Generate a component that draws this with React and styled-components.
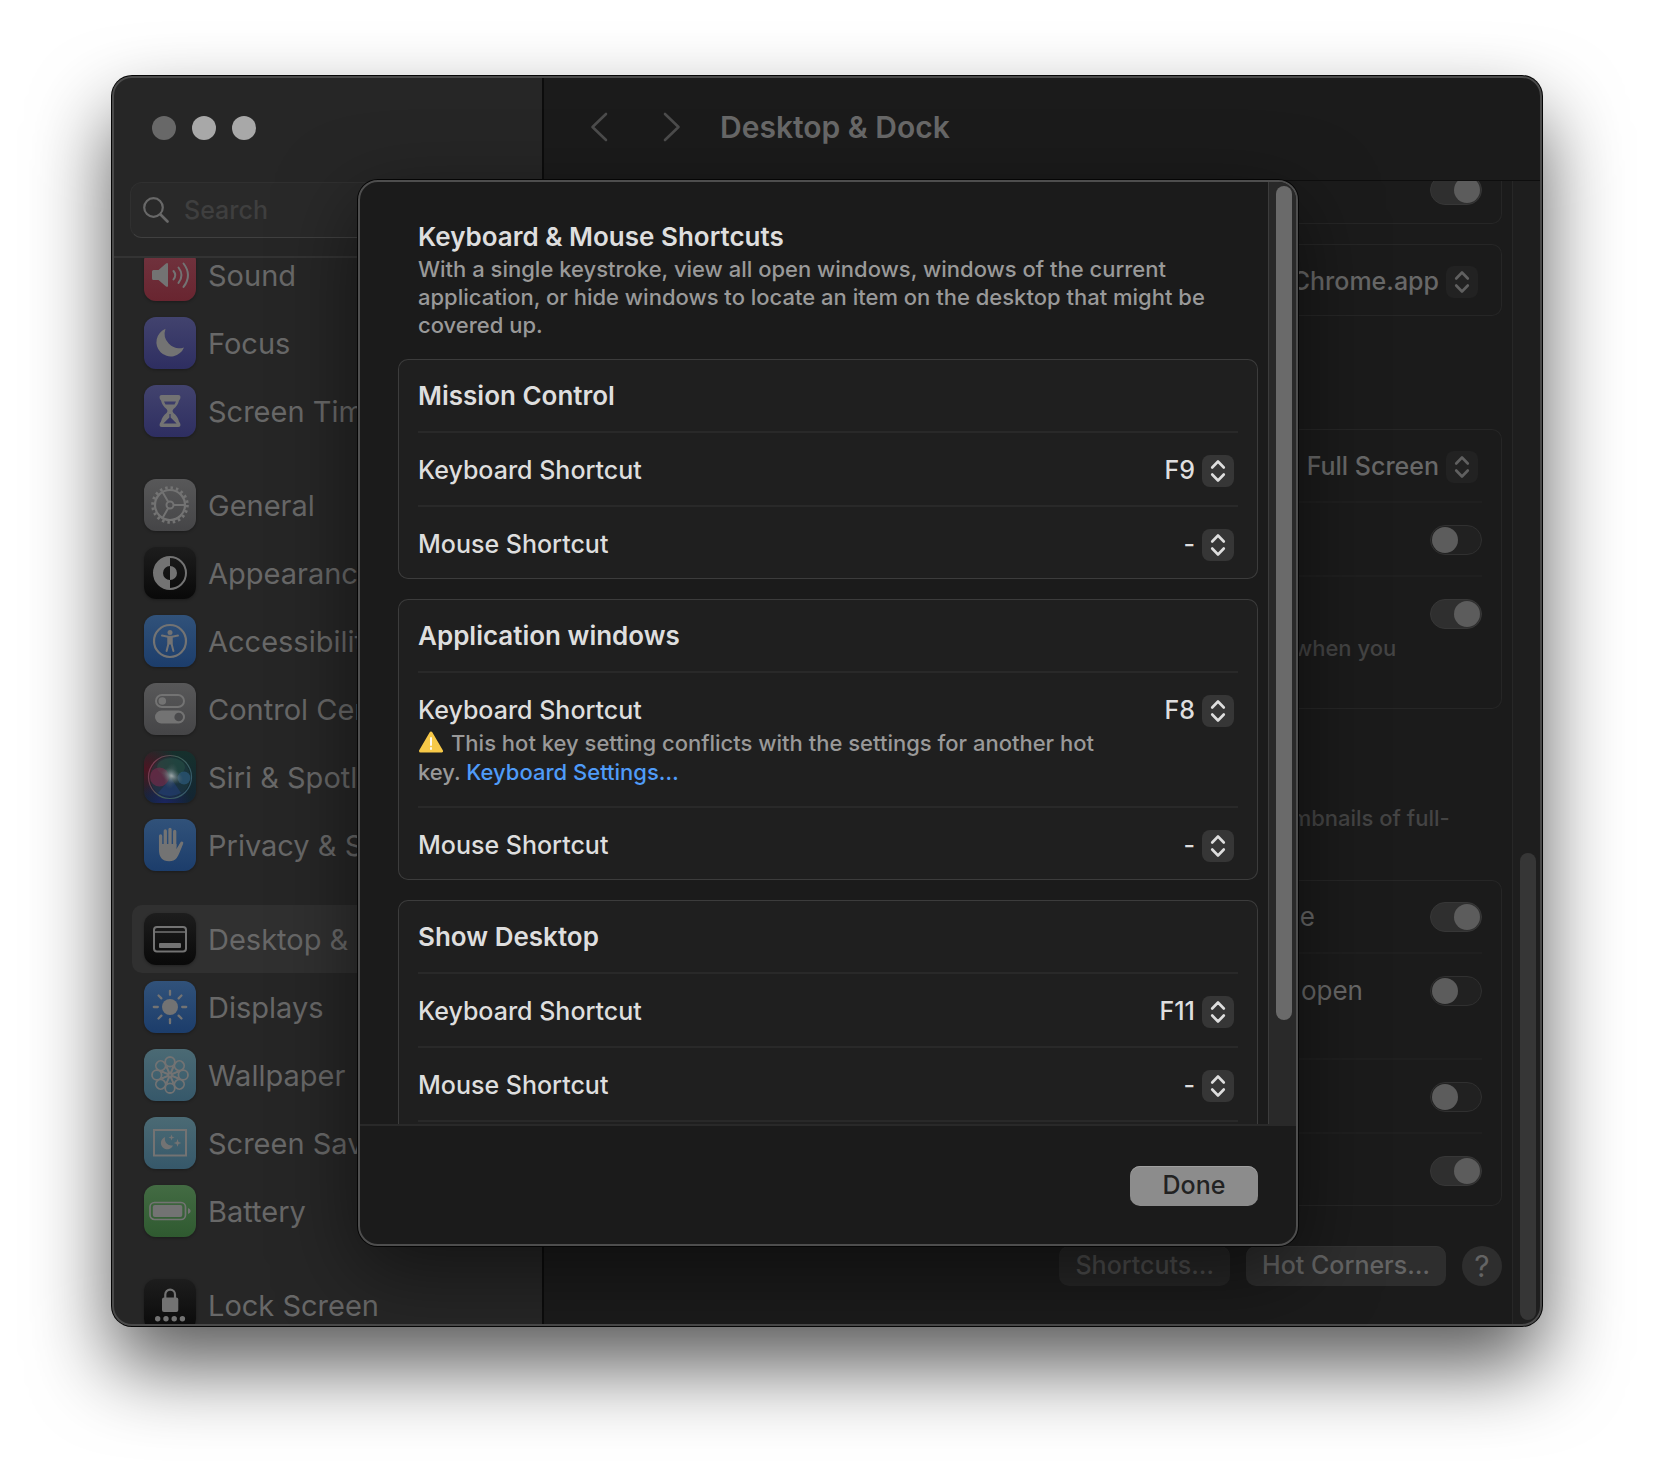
import React from "react";
import styled, { createGlobalStyle, css } from "styled-components";

const GlobalStyle = createGlobalStyle`
  *, *::before, *::after { box-sizing: border-box; }
  body {
    margin: 0;
    background: #fff;
    font-family: Inter, "Liberation Sans", sans-serif;
    font-size: 26px;
    line-height: 32px;
    overflow: hidden;
  }
  button, input, select { font: inherit; }
  ul { list-style: none; margin: 0; padding: 0; }
  h1, h2, h3, p { margin: 0; font-size: inherit; }
`;

/* ---------- window ---------- */

const Page = styled.div`
  display: flex;
  height: 100vh;
  padding: 76px 112px 148px;
`;

const Window = styled.div`
  position: relative;
  flex: 1;
  display: flex;
  min-width: 0;
  border-radius: 20px;
  background: #1b1b1b;
  color: #686868;
  box-shadow: 0 0 0 1px #050505, 0 40px 80px rgba(0, 0, 0, 0.65);
  overflow: hidden;
`;

const Rim = styled.div`
  position: absolute;
  inset: 0;
  border: 2px solid #4a4a4a;
  border-radius: inherit;
  pointer-events: none;
`;

/* ---------- sidebar ---------- */

const Sidebar = styled.aside`
  display: flex;
  flex-direction: column;
  flex: none;
  width: 432px;
  background: #262626;
  border-right: 2px solid #0c0c0c;
`;

const TrafficLights = styled.div`
  display: flex;
  gap: 16px;
  padding: 40px 40px 42px;
`;

const Light = styled.button`
  width: 24px;
  height: 24px;
  padding: 0;
  border: 0;
  border-radius: 50%;
  background: ${(p) => (p.$dim ? "#686868" : "#a8a8a8")};
`;

const SearchBox = styled.label`
  display: flex;
  align-items: center;
  gap: 15px;
  height: 56px;
  margin: 0 18px 18px;
  padding: 0 12px;
  border: 1px solid #303030;
  border-bottom-color: #404040;
  border-radius: 12px;
  background: #292929;
`;

const SearchInput = styled.input`
  flex: 1;
  min-width: 0;
  padding: 0;
  border: 0;
  outline: 0;
  background: none;
  color: #686868;
  font-size: 25px;
  font-weight: 500;
  &::placeholder { color: #3f3f3f; opacity: 1; }
`;

const SidebarScroll = styled.nav`
  flex: 1;
  min-height: 0;
  padding: 0 20px;
  border-top: 2px solid #333;
  overflow: hidden;
`;

const Groups = styled.div`
  display: flex;
  flex-direction: column;
  gap: 26px;
  margin-top: -17px;
`;

const NavLink = styled.a`
  display: flex;
  align-items: center;
  gap: 12px;
  height: 68px;
  padding: 0 12px;
  border-radius: 10px;
  background: ${(p) => (p.$active ? "#303030" : "none")};
  color: inherit;
  text-decoration: none;
`;

const NavLabel = styled.span`
  padding-top: 1px;
  font-size: 29px;
  white-space: nowrap;
`;

const Tile = styled.svg`
  flex: none;
  width: 52px;
  height: 52px;
  border-radius: 12px;
  background: linear-gradient(${(p) => p.$from}, ${(p) => p.$to});
  box-shadow: 0 1px 3px rgba(0, 0, 0, 0.3);
`;

/* ---------- main pane ---------- */

const Main = styled.main`
  flex: 1;
  display: flex;
  flex-direction: column;
  min-width: 0;
`;

const Toolbar = styled.header`
  display: flex;
  align-items: center;
  height: 105px;
  padding: 0 39px 2px;
  border-bottom: 1px solid #0e0e0e;
`;

const ToolButton = styled.button`
  display: grid;
  place-items: center;
  width: 32px;
  height: 40px;
  margin-right: 41px;
  padding: 0;
  border: 0;
  background: none;
  color: #4c4c4c;
`;

const Title = styled.h1`
  margin-left: -9px;
  font-size: 30px;
  font-weight: 600;
`;

const MainBody = styled.div`
  flex: 1;
  display: flex;
  min-height: 0;
`;

const MainScroll = styled.div`
  flex: 1;
  display: flex;
  flex-direction: column;
  justify-content: flex-end;
  min-width: 0;
  padding: 0 10px 40px 32px;
  overflow: hidden;
`;

const Track = styled.div`
  display: flex;
  flex-direction: column;
  justify-content: ${(p) => (p.$end ? "flex-end" : "flex-start")};
  flex: 0 0 30px;
  padding: 6px 6px 6px 7px;
  border-left: 1px solid ${(p) => (p.$lit ? "#3c3c3c" : "#272727")};
  background: ${(p) => (p.$lit ? "#292929" : "#1e1e1e")};
`;

const Thumb = styled.div`
  flex: 0 0 ${(p) => p.$size};
  border-radius: 8px;
  background: ${(p) => (p.$lit ? "#6a6a6a" : "#363636")};
`;

const Card = styled.section`
  flex: none;
  padding: 0 20px;
  border-radius: 10px;
  background: ${(p) => (p.$lit ? "#1f1f1f" : "#1b1b1b")};
  box-shadow: inset 0 0 0 1px ${(p) => (p.$lit ? "#3c3c3c" : "#262626")};
  & + & { margin-top: 20px; }
  > * + * { border-top: 2px solid ${(p) => (p.$lit ? "#292929" : "#1f1f1f")}; }
`;

const Row = styled.div`
  display: flex;
  justify-content: space-between;
  padding: 21px 0 19px;
`;

const RowText = styled.div`
  font-size: ${(p) => (p.$lit ? "25px" : "26px")};
  font-weight: ${(p) => (p.$lit ? 500 : 400)};
  white-space: nowrap;
`;

const CardTitle = styled.h3`
  font-size: 26px;
  font-weight: 600;
`;

const Note = styled.p`
  margin-top: 4px;
  color: ${(p) => (p.$lit ? "#999" : "#444")};
  font-size: 22px;
  font-weight: 500;
  line-height: 28px;
`;

const ConflictNote = styled(Note)`
  margin-top: 3px;
  line-height: 29px;
`;

const Heading = styled.div`
  flex: none;
  padding: ${(p) => (p.$lit ? "39px 20px 20px" : "61px 20px 20px")};
  color: ${(p) => (p.$lit ? "#dedede" : "inherit")};
`;

const HeadingTitle = styled.h2`
  font-size: 26px;
  font-weight: 600;
`;

const HeadingNote = styled(Note)`
  margin-top: 2px;
  white-space: nowrap;
`;

const SelectWrap = styled.div`
  position: relative;
  flex: none;
  height: 32px;
  margin-right: 4px;
`;

const Select = styled.select`
  appearance: none;
  width: ${(p) => (p.$wide ? "320px" : "120px")};
  height: 32px;
  padding: 0 39px 0 0;
  border: 0;
  outline: 0;
  background: none;
  color: inherit;
  font-size: 25px;
  font-weight: 500;
  line-height: 32px;
  text-align: right;
  text-align-last: right;
`;

const Stepper = styled.span`
  position: absolute;
  top: 1px;
  right: 0;
  display: grid;
  width: 32px;
  height: 32px;
  border-radius: 8px;
  background: ${(p) => (p.$lit ? "#363636" : "#222")};
  pointer-events: none;
`;

const Toggle = styled.input`
  appearance: none;
  flex: none;
  width: 52px;
  height: 30px;
  margin: 1px 0 0;
  padding: 1px;
  border: 1px solid #303030;
  border-radius: 15px;
  background: #212121;
  &::before {
    content: "";
    display: block;
    width: 26px;
    height: 26px;
    border-radius: 50%;
    background: #5c5c5c;
  }
  &:checked { background: #2f2f2f; border-color: #373737; }
  &:checked::before { margin-left: auto; }
`;

const Actions = styled.div`
  flex: none;
  display: flex;
  justify-content: flex-end;
  gap: 16px;
  padding-top: 40px;
`;

const buttonBase = css`
  height: 40px;
  padding: 0 16px 2px;
  border: 0;
  border-radius: 10px;
  font-size: 25px;
  font-weight: 500;
  line-height: 38px;
`;

const PushButton = styled.button`
  ${buttonBase}
  background: ${(p) => (p.$pressed ? "#262626" : "#2e2e2e")};
  color: ${(p) => (p.$pressed ? "#4c4c4c" : "#646464")};
  box-shadow: inset 0 1px ${(p) => (p.$pressed ? "#2a2a2a" : "#333")};
`;

const HelpButton = styled.button`
  ${buttonBase}
  width: 40px;
  padding: 0;
  border-radius: 50%;
  background: #2e2e2e;
  color: #646464;
  font-size: 30px;
  font-weight: 400;
`;

/* ---------- sheet ---------- */

const Overlay = styled.div`
  position: absolute;
  inset: 0;
  display: flex;
  padding: 104px 244px 80px 246px;
`;

const Sheet = styled.div`
  position: relative;
  flex: 1;
  display: flex;
  flex-direction: column;
  min-width: 0;
  border: 2px solid #4e4e4e;
  border-radius: 20px;
  background: #1b1b1b;
  color: #dedede;
  box-shadow: 0 0 0 1px #050505, 0 24px 80px rgba(0, 0, 0, 0.5);
`;

const SheetBody = styled.div`
  flex: 1;
  display: flex;
  min-height: 0;
  border-radius: 18px 18px 0 0;
  overflow: hidden;
`;

const SheetScroll = styled.div`
  flex: 1;
  min-width: 0;
  padding: 0 10px 0 38px;
  overflow: hidden;
`;

const SheetTrack = styled(Track)`
  flex-basis: 28px;
  padding: 4px 4px 4px 7px;
`;

const SheetFooter = styled.footer`
  display: flex;
  justify-content: flex-end;
  padding: 40px 38px 38px;
  border-top: 2px solid #292929;
`;

const DoneButton = styled.button`
  ${buttonBase}
  width: 128px;
  background: #8c8c8c;
  color: #222;
  box-shadow: inset 0 1px #a0a0a0;
`;

const InlineLink = styled.a`
  color: #4f9bf8;
  text-decoration: none;
`;

const WarnIcon = styled.svg`
  width: 26px;
  height: 22px;
  margin-right: 7px;
  vertical-align: -2px;
`;

/* ---------- icons ---------- */

const G = "#737373";
const spin = (n, fn) => Array.from({ length: n }, (_, i) => fn((360 / n) * i, i));

const icons = {
  sound: (
    <>
      <path d="M8 22.5q0-1.5 1.5-1.5h5l7.5-6.6q2-1.2 2 1v21.2q0 2.200-2 1l-7.500-6.600h-5q-1.500 0-1.500-1.500z" fill={G} />
      <g fill="none" stroke={G} strokeWidth="2" strokeLinecap="round">
        <path d="M29.500 22q3.500 4.200 0 8.400M34.500 18.500q6 7.700 0 15.400M39.500 14.500q9 11.700 0 23.400" />
      </g>
    </>
  ),
  focus: <path d="M21.500 11.800A14.300 14.300 0 1 0 40 30.400A14.600 14.600 0 0 1 21.500 11.800z" fill={G} />,
  hourglass: (
    <path fillRule="evenodd" fill={G} d="M17.500 10h17q2 0 2 2t-1.500 3.500c-1 4-2.500 6-5.500 8.500q-1.800 1.800 0 4c3 2.500 4.500 4.500 5.500 8.500q1.500 1.500 1.500 3.500t-2 2h-17q-2 0-2-2t1.500-3.500c1-4 2.500-6 5.500-8.500q1.800-2.200 0-4c-3-2.500-4.500-4.500-5.500-8.500q-1.500-1.500-1.500-3.500t2-2zM20 16.500h12l-1.500 3h-9zM26.600 29v3.500l6 6h-13.200l6-6V29z" />
  ),
  gear: (
    <g fill="none" stroke={G}>
      <circle cx="26" cy="26" r="15" strokeWidth="2.200" />
      <circle cx="26" cy="26" r="17.300" strokeWidth="3" strokeDasharray="2.500 2.935" />
      <circle cx="26" cy="26" r="3.500" strokeWidth="2" />
      <path strokeWidth="2" d="M30 26h11M24 22.500L18.500 13M24 29.500L18.500 39" />
    </g>
  ),
  appearance: (
    <>
      <circle cx="26" cy="26" r="16" fill="none" stroke={G} strokeWidth="2" />
      <path d="M26 10a16 16 0 0 0 0 32v-9a7 7 0 0 1 0-14z" fill={G} />
      <path d="M26 19a7 7 0 0 1 0 14z" fill={G} />
    </>
  ),
  accessibility: (
    <>
      <circle cx="26" cy="26" r="16" fill="none" stroke={G} strokeWidth="2.200" />
      <circle cx="26" cy="17.500" r="2.500" fill={G} />
      <path d="M18 20.600l6 1.200h4l6-1.200M24.500 23v5.500L22.600 36M27.500 23v5.500l1.900 7.500" fill="none" stroke={G} strokeWidth="2" strokeLinecap="round" strokeLinejoin="round" />
      <path d="M23.500 21.500h5v8h-5z" fill={G} />
    </>
  ),
  control: (
    <>
      <rect x="12" y="12" width="28" height="12" rx="6" fill="none" stroke={G} strokeWidth="2" />
      <circle cx="18.300" cy="18" r="3.800" fill={G} />
      <rect x="11" y="27.500" width="30" height="13" rx="6.500" fill={G} />
      <circle cx="34.700" cy="34" r="4.300" fill="#4a4a4c" />
    </>
  ),
  siri: (
    <>
      <defs>
        <radialGradient id="siriCore"><stop offset="0" stopColor="#a0a8a8" /><stop offset=".35" stopColor="#7b8b90" stopOpacity=".6" /><stop offset="1" stopColor="#566" stopOpacity="0" /></radialGradient>
        <radialGradient id="siriRed" cx=".05" cy=".35" r=".6"><stop offset="0" stopColor="#4c1522" /><stop offset="1" stopColor="#4c1522" stopOpacity="0" /></radialGradient>
        <radialGradient id="siriBlue" cx=".4" cy="1" r=".5"><stop offset="0" stopColor="#1b2560" /><stop offset="1" stopColor="#1b2560" stopOpacity="0" /></radialGradient>
        <linearGradient id="siriRing" x1="0" x2="1" y1="0.300" y2=".7"><stop offset="0" stopColor="#7a3850" /><stop offset=".5" stopColor="#3f5f56" /><stop offset="1" stopColor="#34586a" /></linearGradient>
      </defs>
      <rect width="52" height="52" fill="url(#siriRed)" />
      <rect width="52" height="52" fill="url(#siriBlue)" />
      <circle cx="26" cy="26" r="20" fill="#22404a" opacity=".45" />
      <ellipse cx="27" cy="16" rx="14" ry="9" fill="#2a5a48" opacity=".4" />
      <circle cx="15.500" cy="26" r="9.500" fill="#7d2a4c" opacity=".6" />
      <circle cx="40" cy="27" r="6.500" fill="#2f5f86" opacity=".6" />
      <path d="M27 27L14 42q12 6 23 0z" fill="#24407c" opacity=".5" />
      <ellipse cx="28" cy="25" rx="12" ry="7" fill="url(#siriCore)" transform="rotate(25 28 25)" />
      <ellipse cx="27" cy="25" rx="7" ry="13" fill="url(#siriCore)" opacity=".6" transform="rotate(10 27 25)" />
      <circle cx="26" cy="26" r="21.500" fill="none" stroke="url(#siriRing)" strokeWidth="1.200" />
    </>
  ),
  hand: (
    <g fill={G} stroke={G} strokeLinecap="round">
      <path strokeWidth="3.300" fill="none" d="M16.600 17v14M21.300 12v15M26 10.500v15M30.700 12.500v15" />
      <path strokeWidth="3" fill="none" d="M37.800 24L33 33" />
      <path stroke="none" d="M15 25h17.500v5l3.500-5.500 2.700 1c-2 5.500-4 10.500-6 13.500-2 2.500-4 3.200-7.500 3.200C18 42.200 15 38 15 31z" />
    </g>
  ),
  desktop: (
    <>
      <rect x="10" y="14" width="32" height="24.500" rx="3" fill="none" stroke={G} strokeWidth="2" />
      <path d="M10 19h32" stroke={G} strokeWidth="1.600" />
      <rect x="15" y="30" width="22" height="5" rx="1" fill={G} />
    </>
  ),
  displays: (
    <>
      <circle cx="26" cy="26" r="8" fill={G} />
      {spin(8, (a) => (
        <path key={a} d="M26 9.800v4" stroke={G} strokeWidth="2.300" strokeLinecap="round" transform={`rotate(${a} 26 26)`} />
      ))}
    </>
  ),
  wallpaper: (
    <g fill="none" stroke={G} strokeWidth="1.800">
      {spin(8, (a) => (
        <g key={a} transform={`rotate(${a} 26 26)`}>
          <circle cx="26" cy="12.800" r="4.800" />
          <path d="M26 25C24.500 22 23 19.500 22.800 16.400M26 25C27.500 22 29 19.500 29.200 16.400" strokeWidth="1.600" />
        </g>
      ))}
      <circle cx="26" cy="26" r="2" />
    </g>
  ),
  saver: (
    <>
      <rect x="10" y="13" width="32" height="25.500" fill="none" stroke={G} strokeWidth="2" />
      <path d="M21.200 20a6.300 6.300 0 1 0 7.800 8.400A6.600 6.600 0 0 1 21.200 20z" fill={G} />
      <path d="M27.500 17.500l.8 2.200 2.200.8-2.200.8-.8 2.200-.8-2.200-2.200-.8 2.200-.8zM33.500 22l1 2.900 2.900 1-2.900 1-1 2.900-1-2.900-2.900-1 2.900-1z" fill={G} />
    </>
  ),
  battery: (
    <>
      <rect x="6" y="17.500" width="35.500" height="17" rx="4.500" fill="none" stroke={G} strokeWidth="1.700" />
      <rect x="8.800" y="20" width="29.500" height="12" rx="2" fill={G} />
      <path d="M44 23q2.700.8 2.700 3t-2.700 3z" fill={G} />
    </>
  ),
  lock: (
    <>
      <rect x="18" y="18.500" width="16.300" height="14.500" rx="2" fill={G} />
      <path d="M21.300 19v-3.500a4.850 4.850 0 0 1 9.700 0V19" fill="none" stroke={G} strokeWidth="2.200" />
      {[13.7, 22, 30.2, 38.4].map((x) => <circle key={x} cx={x} cy="39.700" r="2.700" fill={G} />)}
    </>
  ),
};

const tileColors = {
  red: ["#71343f", "#692530"],
  indigo: ["#42436e", "#2e2e61"],
  gray: ["#585859", "#454547"],
  black: ["#1d1d1d", "#090909"],
  blue: ["#31527a", "#1c3d6b"],
  siri: ["#16302c", "#132432"],
  cyan: ["#4b6a74", "#36586a"],
  green: ["#436b43", "#2f5a30"],
};

const sidebarGroups = [
  [
    ["Sound", "sound", "red"],
    ["Focus", "focus", "indigo"],
    ["Screen Time", "hourglass", "indigo"],
  ],
  [
    ["General", "gear", "gray"],
    ["Appearance", "appearance", "black"],
    ["Accessibility", "accessibility", "blue"],
    ["Control Center", "control", "gray"],
    ["Siri & Spotlight", "siri", "siri"],
    ["Privacy & Security", "hand", "blue"],
  ],
  [
    ["Desktop & Dock", "desktop", "black"],
    ["Displays", "displays", "blue"],
    ["Wallpaper", "wallpaper", "cyan"],
    ["Screen Saver", "saver", "cyan"],
    ["Battery", "battery", "green"],
  ],
  [["Lock Screen", "lock", "black"]],
];

function Popup({ value, label, lit }) {
  return (
    <SelectWrap>
      <Select aria-label={label} defaultValue={value} $wide={!lit}>
        <option>{value}</option>
      </Select>
      <Stepper $lit={lit}>
        <svg width="32" height="32" viewBox="0 0 32 32" fill="none" stroke={lit ? "#dedede" : "#606060"} strokeWidth="2.600" strokeLinecap="round" strokeLinejoin="round">
          <path d="M10.200 12.500L16 6.500l5.800 6M10.200 19.500l5.800 6 5.800-6" />
        </svg>
      </Stepper>
    </SelectWrap>
  );
}

function SwitchRow({ id, label, note, on }) {
  return (
    <Row>
      <RowText>
        <label htmlFor={id}>{label}</label>
        {note && <Note>{note}</Note>}
      </RowText>
      <Toggle type="checkbox" role="switch" id={id} defaultChecked={on} />
    </Row>
  );
}

function ShortcutCard({ title, shortcut, conflict, children }) {
  return (
    <Card $lit>
      <Row>
        <CardTitle>{title}</CardTitle>
      </Row>
      <Row>
        <RowText $lit>
          Keyboard Shortcut
          {conflict && (
            <ConflictNote $lit>
              <WarnIcon viewBox="0 0 26 22" aria-hidden="true">
                <path d="M13 2L23.500 20H2.500z" fill="#f7c948" stroke="#f7c948" strokeWidth="3" strokeLinejoin="round" />
                <path d="M13 7v7M13 17v1" stroke="#fff" strokeWidth="1.800" strokeLinecap="round" />
              </WarnIcon>
              This hot key setting conflicts with the settings for another hot
              <br />
              key. <InlineLink href="#keyboard">Keyboard Settings…</InlineLink>
            </ConflictNote>
          )}
        </RowText>
        <Popup lit value={shortcut} label={`${title} keyboard shortcut`} />
      </Row>
      <Row>
        <RowText $lit>Mouse Shortcut</RowText>
        <Popup lit value="-" label={`${title} mouse shortcut`} />
      </Row>
      {children}
    </Card>
  );
}

export default function App() {
  return (
    <>
      <GlobalStyle />
      <Page>
        <Window>
          <Sidebar>
            <TrafficLights>
              <Light $dim aria-label="Close" />
              <Light aria-label="Minimize" />
              <Light aria-label="Zoom" />
            </TrafficLights>
            <SearchBox>
              <svg width="26" height="26" viewBox="0 0 26 26" fill="none" stroke="#686868" strokeWidth="2.200" strokeLinecap="round" aria-hidden="true">
                <circle cx="10.500" cy="10.500" r="9.300" />
                <path d="M17.500 17.500l7 7" strokeWidth="2.600" />
              </svg>
              <SearchInput type="text" placeholder="Search" aria-label="Search" />
            </SearchBox>
            <SidebarScroll>
              <Groups>
                {sidebarGroups.map((group, i) => (
                  <ul key={i}>
                    {group.map(([name, icon, color]) => (
                      <li key={name}>
                        <NavLink href={`#${icon}`} $active={icon === "desktop"}>
                          <Tile viewBox="0 0 52 52" aria-hidden="true" $from={tileColors[color][0]} $to={tileColors[color][1]}>
                            {icons[icon]}
                          </Tile>
                          <NavLabel>{name}</NavLabel>
                        </NavLink>
                      </li>
                    ))}
                  </ul>
                ))}
              </Groups>
            </SidebarScroll>
          </Sidebar>

          <Main>
            <Toolbar>
              <ToolButton aria-label="Back">
                <svg width="18" height="30" viewBox="0 0 18 30" fill="none" stroke="currentColor" strokeWidth="2.600" strokeLinecap="round" strokeLinejoin="round">
                  <path d="M16 2L2.500 15 16 28" />
                </svg>
              </ToolButton>
              <ToolButton aria-label="Forward">
                <svg width="18" height="30" viewBox="0 0 18 30" fill="none" stroke="currentColor" strokeWidth="2.600" strokeLinecap="round" strokeLinejoin="round">
                  <path d="M2 2l13.500 13L2 28" />
                </svg>
              </ToolButton>
              <Title>Desktop &amp; Dock</Title>
            </Toolbar>
            <MainBody>
              <MainScroll>
                <Card>
                  <SwitchRow id="stage" label="" on />
                </Card>
                <Card>
                  <Row>
                    <RowText>Default web browser</RowText>
                    <Popup value="Google Chrome.app" label="Default web browser" />
                  </Row>
                </Card>
                <Heading>
                  <HeadingTitle>Windows</HeadingTitle>
                </Heading>
                <Card>
                  <Row>
                    <RowText>Prefer tabs when opening documents</RowText>
                    <Popup value="In Full Screen" label="Prefer tabs when opening documents" />
                  </Row>
                  <SwitchRow id="ask" label="Ask to keep changes when closing documents" />
                  <SwitchRow
                    id="close"
                    on
                    label="Close windows when quitting an application"
                    note={<>When enabled, open documents and windows will not be restored when you<br />re-open an application.</>}
                  />
                </Card>
                <Heading>
                  <HeadingTitle>Mission Control</HeadingTitle>
                  <HeadingNote>
                    Mission Control shows an overview of your open windows and thumbnails of full-
                    <br />
                    screen applications, all arranged in a unified view.
                  </HeadingNote>
                </Heading>
                <Card>
                  <SwitchRow id="rearrange" label="Automatically rearrange Spaces based on most recent use" on />
                  <SwitchRow
                    id="switch"
                    label={<>When switching to an application, switch to a Space with open<br />windows for the application</>}
                  />
                  <SwitchRow id="group" label="Group windows by application" />
                  <SwitchRow id="separate" label="Displays have separate Spaces" on />
                </Card>
                <Actions>
                  <PushButton $pressed>Shortcuts…</PushButton>
                  <PushButton>Hot Corners…</PushButton>
                  <HelpButton aria-label="Help">?</HelpButton>
                </Actions>
              </MainScroll>
              <Track $end>
                <Thumb $size="41.2%" />
              </Track>
            </MainBody>
          </Main>

          <Rim />

          <Overlay>
            <Sheet role="dialog" aria-modal="true" aria-labelledby="sheet-title">
              <SheetBody>
                <SheetScroll>
                  <Heading $lit>
                    <HeadingTitle id="sheet-title">Keyboard &amp; Mouse Shortcuts</HeadingTitle>
                    <HeadingNote $lit>
                      With a single keystroke, view all open windows, windows of the current
                      <br />
                      application, or hide windows to locate an item on the desktop that might be
                      <br />
                      covered up.
                    </HeadingNote>
                  </Heading>
                  <ShortcutCard title="Mission Control" shortcut="F9" />
                  <ShortcutCard title="Application windows" shortcut="F8" conflict />
                  <ShortcutCard title="Show Desktop" shortcut="F11">
                    <Row />
                  </ShortcutCard>
                </SheetScroll>
                <SheetTrack $lit>
                  <Thumb $lit $size="89.3%" />
                </SheetTrack>
              </SheetBody>
              <SheetFooter>
                <DoneButton>Done</DoneButton>
              </SheetFooter>
            </Sheet>
          </Overlay>
        </Window>
      </Page>
    </>
  );
}
